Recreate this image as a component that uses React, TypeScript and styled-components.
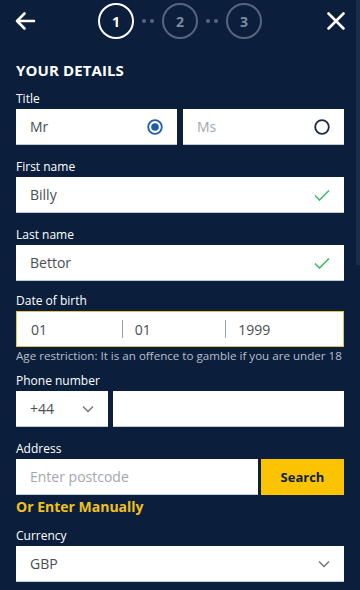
import React from 'react';
import styled, { createGlobalStyle } from 'styled-components';

const GlobalStyle = createGlobalStyle`
  html, body {
    margin: 0;
    padding: 0;
    background: #0b1f3d;
  }
  body {
    font-family: "Open Sans", "Noto Sans", "Liberation Sans", sans-serif;
    color: #ffffff;
  }
  * { box-sizing: border-box; }
`

const Page = styled.div`
  min-height: 590px;
  background: #0b1f3d;
  padding: 0 16px 20px;
`

const ScrollThumb = styled.div`
  position: fixed;
  top: 0;
  right: 0;
  width: 4px;
  height: 265px;
  background: #1a2d4b;
`

const Header = styled.div`
  display: grid;
  grid-template-columns: 1fr auto 1fr;
  align-items: center;
  height: 42px;
  margin: 0 -2px;
`

const IconButton = styled.button<{ $align: 'start' | 'end' }>`
  justify-self: ${p => p.$align};
  background: none;
  border: 0;
  padding: 0;
  display: flex;
  color: #fff;
`

const Stepper = styled.div`
  display: flex;
  align-items: center;
`

const Step = styled.div<{ $active?: boolean }>`
  width: 36px;
  height: 36px;
  border-radius: 50%;
  border: ${p => (p.$active ? '2.5px solid #ffffff' : '2px solid #55657f')};
  color: ${p => (p.$active ? '#ffffff' : '#7f8ba0')};
  display: flex;
  align-items: center;
  justify-content: center;
  font-weight: 700;
  font-size: 14px;
`

const Dots = styled.div`
  display: flex;
  gap: 4px;
  margin: 0 8px;

  span {
    width: 4px;
    height: 4px;
    border-radius: 50%;
    background: #55657f;
  }
`

const Heading = styled.h1`
  margin: 18px 0 11px;
  font-size: 15px;
  line-height: 20px;
  font-weight: 700;
  letter-spacing: 0.1px;
`

const Field = styled.div<{ $gap?: number }>`
  margin-bottom: ${p => p.$gap ?? 14}px;
`

const Label = styled.div`
  font-size: 12px;
  line-height: 15px;
  margin-bottom: 3px;
`

const Row = styled.div<{ $gap: number }>`
  display: flex;
  gap: ${p => p.$gap}px;
`

const Box = styled.div<{ $width?: number; $outline?: boolean }>`
  flex: ${p => (p.$width ? `0 0 ${p.$width}px` : '1 1 0')};
  height: 36px;
  background: #ffffff;
  display: flex;
  align-items: center;
  padding: 0 14px 0 14px;
  border-bottom: 1px solid #c3cbd8;
  ${p => p.$outline && 'border: 1.5px solid #e3c34c;'}
`

const Value = styled.span<{ $muted?: boolean }>`
  flex: 1;
  font-size: 14px;
  color: ${p => (p.$muted ? '#a3a7ad' : '#4a4d52')};
`

const DateSegment = styled.div`
  flex: 1;
  display: flex;
  align-items: center;
  height: 18px;
  padding-left: 12px;
  font-size: 14px;
  color: #4a4d52;

  &:first-child { padding-left: 0; }
  & + & { border-left: 1.5px solid #9aa0a8; }
`

const Hint = styled.div`
  font-size: 11.6px;
  line-height: 15px;
  color: #b9bec8;
  margin-top: 1px;
  margin-bottom: 10px;
  white-space: nowrap;
`

const SearchButton = styled.button`
  flex: 0 0 83px;
  height: 36px;
  border: 0;
  background: #fcc400;
  color: #0b1f3d;
  font-family: inherit;
  font-weight: 700;
  font-size: 13px;
`

const LinkText = styled.div`
  color: #f1c21b;
  font-weight: 700;
  font-size: 14px;
  line-height: 18px;
  margin: 3px 0 12px;
`

const Radio: React.FC<{ checked?: boolean }> = ({ checked }) => (
  <svg width="16" height="16" viewBox="0 0 16 16">
    <circle cx="8" cy="8" r="6.8" fill="none" stroke={checked ? '#1c5cab' : '#1b2a44'} strokeWidth="1.8" />
    {checked && <circle cx="8" cy="8" r="3.8" fill="#1c5cab" />}
  </svg>
)

const Check = () => (
  <svg width="16" height="12" viewBox="0 0 16 12">
    <path d="M1 6.5 L5.5 11 L15 1.5" fill="none" stroke="#43b865" strokeWidth="1.6" />
  </svg>
)

const Chevron = () => (
  <svg width="12" height="8" viewBox="0 0 12 8">
    <path d="M1 1.5 L6 6.5 L11 1.5" fill="none" stroke="#6b7078" strokeWidth="1.3" />
  </svg>
)

const App: React.FC = () => {
  return <>
    <GlobalStyle />
    <Page>
      <Header>
        <IconButton $align="start">
          <svg width="22" height="20" viewBox="0 0 22 20">
            <path d="M20 10 H3 M10.5 2.5 L3 10 L10.5 17.5" fill="none" stroke="#fff" strokeWidth="2.6" strokeLinecap="round" strokeLinejoin="round" />
          </svg>
        </IconButton>
        <Stepper>
          <Step $active>1</Step>
          <Dots><span /><span /></Dots>
          <Step>2</Step>
          <Dots><span /><span /></Dots>
          <Step>3</Step>
        </Stepper>
        <IconButton $align="end">
          <svg width="20" height="20" viewBox="0 0 20 20">
            <path d="M2.5 2.5 L17.5 17.5 M17.5 2.5 L2.5 17.5" fill="none" stroke="#fff" strokeWidth="2.6" strokeLinecap="round" />
          </svg>
        </IconButton>
      </Header>

      <Heading>YOUR DETAILS</Heading>

      <Field>
        <Label>Title</Label>
        <Row $gap={6}>
          <Box><Value>Mr</Value><Radio checked /></Box>
          <Box><Value $muted>Ms</Value><Radio /></Box>
        </Row>
      </Field>

      <Field>
        <Label>First name</Label>
        <Box><Value>Billy</Value><Check /></Box>
      </Field>

      <Field $gap={12}>
        <Label>Last name</Label>
        <Box><Value>Bettor</Value><Check /></Box>
      </Field>

      <Field $gap={0}>
        <Label>Date of birth</Label>
        <Box $outline>
          <DateSegment>01</DateSegment>
          <DateSegment>01</DateSegment>
          <DateSegment>1999</DateSegment>
        </Box>
        <Hint>Age restriction: It is an offence to gamble if you are under 18</Hint>
      </Field>

      <Field>
        <Label>Phone number</Label>
        <Row $gap={5}>
          <Box $width={92}><Value>+44</Value><Chevron /></Box>
          <Box />
        </Row>
      </Field>

      <Field $gap={0}>
        <Label>Address</Label>
        <Row $gap={3}>
          <Box><Value $muted>Enter postcode</Value></Box>
          <SearchButton>Search</SearchButton>
        </Row>
        <LinkText>Or Enter Manually</LinkText>
      </Field>

      <Field>
        <Label>Currency</Label>
        <Box><Value>GBP</Value><Chevron /></Box>
      </Field>
    </Page>
    <ScrollThumb />
  </>
}

export default App;
